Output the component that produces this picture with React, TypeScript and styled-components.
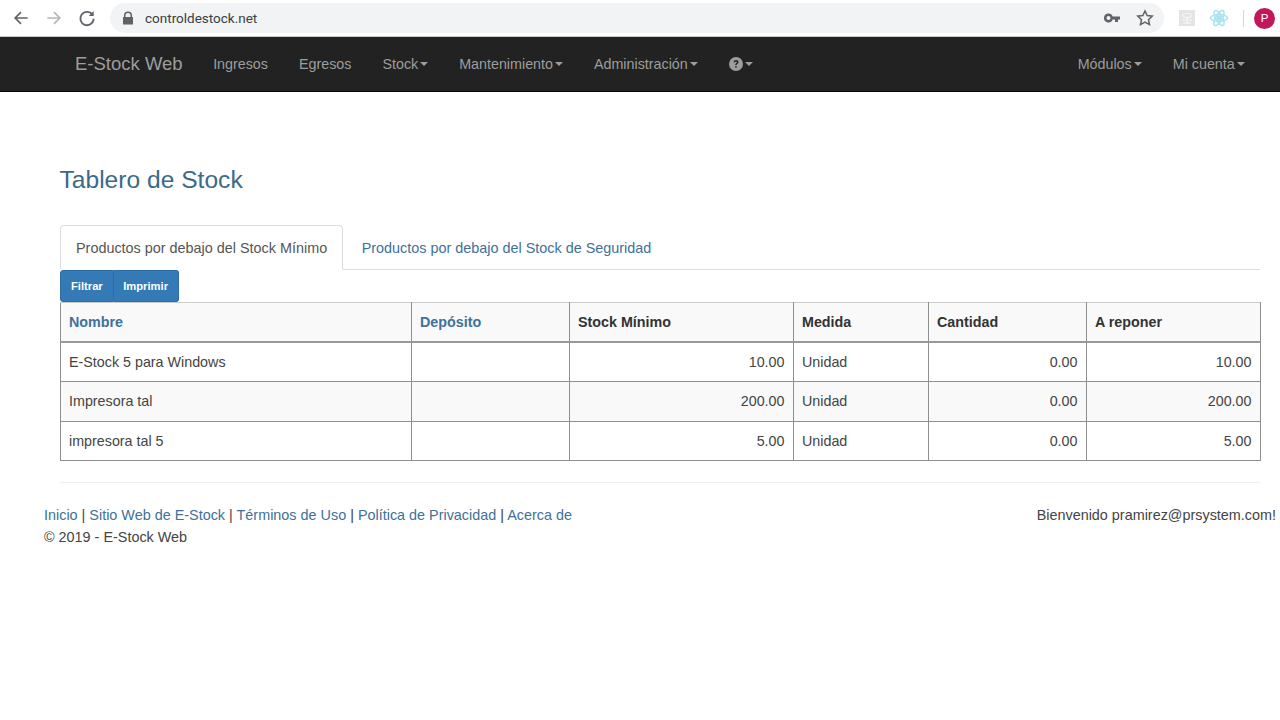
import React from 'react'
import styled, { createGlobalStyle } from 'styled-components'

const GlobalStyle = createGlobalStyle`
  html, body { margin: 0; padding: 0; background: #fff; }
  body {
    font-family: "Liberation Sans", Arial, sans-serif;
    font-size: 14px;
    line-height: 20px;
    color: #444;
  }
`

const Page = styled.div`
  width: 1280px;
  height: 720px;
  overflow: hidden;
  display: flex;
  flex-direction: column;
`

/* browser chrome */
const BrowserBar = styled.div`
  height: 36px;
  display: flex;
  align-items: center;
  padding-left: 11px;
  background: #fff;
  border-bottom: 1px solid #c8c8c8;
`
const ChromeIcon = styled.svg<{ $gap?: number }>`
  width: 20px;
  height: 20px;
  flex: none;
  margin-right: ${(p) => p.$gap ?? 0}px;
`
const Omnibox = styled.div`
  width: 1054px;
  height: 30px;
  margin-left: 13px;
  border-radius: 15px;
  background: #f1f3f4;
  display: flex;
  align-items: center;
  padding: 0 9px 0 12px;
  box-sizing: border-box;
`
const Url = styled.span`
  font-family: "Roboto", "Liberation Sans", sans-serif;
  font-size: 13.5px;
  color: #3c4043;
  margin-left: 11px;
  flex: 1;
`
const StarIcon = styled(ChromeIcon)`
  margin-left: 15px;
`
const Extensions = styled.div`
  display: flex;
  align-items: center;
  margin-left: 14px;
`
const ReactLogo = styled.svg`
  width: 20px;
  height: 20px;
  margin-left: 13px;
`
const Divider = styled.span`
  width: 1px;
  height: 17px;
  background: #d5d7da;
  margin: 0 10px 0 14px;
`
const Avatar = styled.span`
  width: 21px;
  height: 21px;
  border-radius: 50%;
  background: #c2185b;
  color: #fff;
  font-size: 11.5px;
  line-height: 21px;
  text-align: center;
`

/* navbar */
const Navbar = styled.nav`
  height: 55px;
  flex: none;
  background: #222;
  border-bottom: 1px solid #080808;
  box-sizing: border-box;
  display: flex;
  align-items: center;
  padding: 0 19.8px 0 60px;
  color: #9d9d9d;
`
const Brand = styled.a`
  font-size: 18.5px;
  padding: 0 15px;
`
const NavItem = styled.a`
  padding: 0 15.5px;
  font-size: 14.3px;
  display: flex;
  align-items: center;
`
const NavSpacer = styled.div`
  flex: 1;
`
const Caret = styled.span`
  width: 0;
  height: 0;
  margin-left: 2px;
  border-top: 4px solid #9d9d9d;
  border-left: 4px solid transparent;
  border-right: 4px solid transparent;
`

/* content */
const Content = styled.main`
  padding: 72.5px 20px 0 59.5px;
`
const Title = styled.h2`
  margin: 0 0 30.5px;
  font-size: 24.6px;
  font-weight: 400;
  line-height: 30px;
  color: #3b6a88;
`
const Tabs = styled.div`
  display: flex;
  height: 45px;
  box-sizing: border-box;
  border-bottom: 1px solid #ddd;
`
const Tab = styled.a<{ $active?: boolean }>`
  height: ${(p) => (p.$active ? 45 : 44)}px;
  box-sizing: border-box;
  font-size: 14.4px;
  line-height: 44px;
  padding: ${(p) => (p.$active ? '0 14.5px 0 15.5px' : '0 18px')};
  border-radius: 4px 4px 0 0;
  color: ${(p) => (p.$active ? '#555' : '#40719a')};
  background: #fff;
  border: 1px solid ${(p) => (p.$active ? '#ddd' : 'transparent')};
  border-bottom-color: ${(p) => (p.$active ? '#fff' : 'transparent')};
`
const ButtonGroup = styled.div`
  display: flex;
  height: 32px;
`
const Button = styled.button<{ $first?: boolean }>`
  font: bold 11.2px/18px "Liberation Sans", Arial, sans-serif;
  color: #fff;
  background: #337ab7;
  border: 1px solid #2e6da4;
  border-left-width: ${(p) => (p.$first ? 1 : 0)}px;
  border-radius: ${(p) => (p.$first ? '3px 0 0 3px' : '0 3px 3px 0')};
  padding: ${(p) => (p.$first ? '0 10px 0 10.5px' : '0 10.5px 0 9.5px')};
`
const Table = styled.table`
  width: 1201px;
  table-layout: fixed;
  border-collapse: collapse;
  font-size: 14.3px;
  border-right: 1px solid #aaa;
`
const Th = styled.th<{ $link?: boolean }>`
  height: 39.5px;
  padding: 0 8.5px;
  box-sizing: border-box;
  text-align: left;
  font-weight: 700;
  color: ${(p) => (p.$link ? '#40719a' : '#333')};
  background: #f9f9f9;
  border: 1px solid #8f8f8f;
  border-top-color: #ccc;
  border-bottom: 2px solid #999;
`
const Row = styled.tr<{ $striped: boolean }>`
  background: ${(p) => (p.$striped ? '#f9f9f9' : '#fff')};
`
const Td = styled.td<{ $right?: boolean }>`
  height: 39.5px;
  padding: ${(p) => (p.$right ? '0 8px 0 8.5px' : '0 8.5px')};
  box-sizing: border-box;
  text-align: ${(p) => (p.$right ? 'right' : 'left')};
  border: 1px solid #8f8f8f;
`
const Rule = styled.hr`
  margin: 21px 0 0;
  border: 0;
  border-top: 1px solid #eee;
`

/* footer */
const Footer = styled.footer`
  display: flex;
  justify-content: space-between;
  padding: 20.5px 4px 0 44px;
  font-size: 14.4px;
  line-height: 22px;
`
const FooterLink = styled.a`
  color: #40719a;
`

const columns = [351, 158, 224, 135, 158, 174]
const rows = [
  ['E-Stock 5 para Windows', '', '10.00', 'Unidad', '0.00', '10.00'],
  ['Impresora tal', '', '200.00', 'Unidad', '0.00', '200.00'],
  ['impresora tal 5', '', '5.00', 'Unidad', '0.00', '5.00'],
]
const headers = ['Nombre', 'Depósito', 'Stock Mínimo', 'Medida', 'Cantidad', 'A reponer']
const rightCols = [2, 4, 5]
const links = ['Inicio', 'Sitio Web de E-Stock', 'Términos de Uso', 'Política de Privacidad', 'Acerca de']

export default function App() {
  return (
    <Page>
      <GlobalStyle />
      <BrowserBar>
        <ChromeIcon $gap={13} viewBox="0 0 24 24" fill="none" stroke="#5f6368" strokeWidth="2">
          <path d="M20 12H5M12 5l-7 7 7 7" />
        </ChromeIcon>
        <ChromeIcon $gap={13} viewBox="0 0 24 24" fill="none" stroke="#b4b7ba" strokeWidth="2">
          <path d="M4 12h15M12 5l7 7-7 7" />
        </ChromeIcon>
        <ChromeIcon viewBox="0 0 24 24" fill="none" stroke="#5f6368" strokeWidth="2.2">
          <path d="M18.5 8A8 8 0 1 0 20 13" />
          <path d="M20 3.5V9.5H14" fill="#5f6368" stroke="none" />
        </ChromeIcon>
        <Omnibox>
          <svg width="12" height="14" viewBox="0 0 12 14">
            <path d="M2 6V4.500a4 4 0 0 1 8 0V6h1v7.500H1V6zM3.500 6h5V4.500a2.500 2.500 0 0 0-5 0z" fill="#5f6368" />
          </svg>
          <Url>controldestock.net</Url>
          <svg width="16" height="10" viewBox="0 0 16 10">
            <path d="M4.500 0.500a4.500 4.500 0 0 1 4.200 3H16v3h-2v2.500h-3V6.500H8.700A4.500 4.500 0 1 1 4.500 0.500zm0 2.500a2 2 0 1 0 0 4 2 2 0 0 0 0-4z" fill="#5f6368" />
          </svg>
          <StarIcon viewBox="0 0 24 24" fill="none" stroke="#5f6368" strokeWidth="1.8">
            <path d="M12 3.500l2.600 5.600 6.100.7-4.500 4.200 1.200 6-5.400-3-5.400 3 1.200-6-4.500-4.200 6.100-.7z" />
          </StarIcon>
        </Omnibox>
        <Extensions>
          <svg width="18" height="18" viewBox="0 0 18 18">
            <rect x="1" y="1" width="16" height="16" fill="#e3e4e4" />
            <ellipse cx="9" cy="6.500" rx="4.500" ry="2" fill="none" stroke="#f6f6f6" strokeWidth="1.2" />
            <path d="M4 11h10M5 14h8M9 8v7" stroke="#f6f6f6" strokeWidth="1.2" />
          </svg>
          <ReactLogo viewBox="0 0 20 20" fill="none" stroke="#a5e4f1" strokeWidth="1.5">
            <circle cx="10" cy="10" r="1.800" fill="#a5e4f1" />
            <ellipse cx="10" cy="10" rx="8.500" ry="3.300" />
            <ellipse cx="10" cy="10" rx="8.500" ry="3.300" transform="rotate(60 10 10)" />
            <ellipse cx="10" cy="10" rx="8.500" ry="3.300" transform="rotate(120 10 10)" />
          </ReactLogo>
          <Divider />
          <Avatar>P</Avatar>
        </Extensions>
      </BrowserBar>

      <Navbar>
        <Brand>E-Stock Web</Brand>
        <NavItem>Ingresos</NavItem>
        <NavItem>Egresos</NavItem>
        <NavItem>Stock<Caret /></NavItem>
        <NavItem>Mantenimiento<Caret /></NavItem>
        <NavItem>Administración<Caret /></NavItem>
        <NavItem>
          <svg width="14" height="14" viewBox="0 0 14 14">
            <circle cx="7" cy="7" r="7" fill="#9d9d9d" />
            <path d="M4.600 5.300C4.700 3.900 5.700 3.100 7.100 3.100c1.400 0 2.400.8 2.400 2 0 1.800-1.800 1.700-1.800 3H6.200c0-2 1.700-2 1.700-2.900 0-.5-.4-.8-.9-.8-.5 0-.9.3-1 .9zM6.200 9h1.500v1.600H6.200z" fill="#222" />
          </svg>
          <Caret />
        </NavItem>
        <NavSpacer />
        <NavItem>Módulos<Caret /></NavItem>
        <NavItem>Mi cuenta<Caret /></NavItem>
      </Navbar>

      <Content>
        <Title>Tablero de Stock</Title>
        <Tabs>
          <Tab $active>Productos por debajo del Stock Mínimo</Tab>
          <Tab>Productos por debajo del Stock de Seguridad</Tab>
        </Tabs>
        <ButtonGroup>
          <Button $first>Filtrar</Button>
          <Button>Imprimir</Button>
        </ButtonGroup>
        <Table>
          <colgroup>
            {columns.map((w, i) => <col key={i} width={w} />)}
          </colgroup>
          <thead>
            <tr>
              {headers.map((h, i) => <Th key={h} $link={i < 2}>{h}</Th>)}
            </tr>
          </thead>
          <tbody>
            {rows.map((r, i) => (
              <Row key={i} $striped={i % 2 === 1}>
                {r.map((c, j) => <Td key={j} $right={rightCols.includes(j)}>{c}</Td>)}
              </Row>
            ))}
          </tbody>
        </Table>
        <Rule />
      </Content>

      <Footer>
        <div>
          {links.map((l, i) => (
            <React.Fragment key={l}>
              {i > 0 && ' | '}
              <FooterLink>{l}</FooterLink>
            </React.Fragment>
          ))}
          <br />
          © 2019 - E-Stock Web
        </div>
        <div>Bienvenido pramirez@prsystem.com!</div>
      </Footer>
    </Page>
  )
}
